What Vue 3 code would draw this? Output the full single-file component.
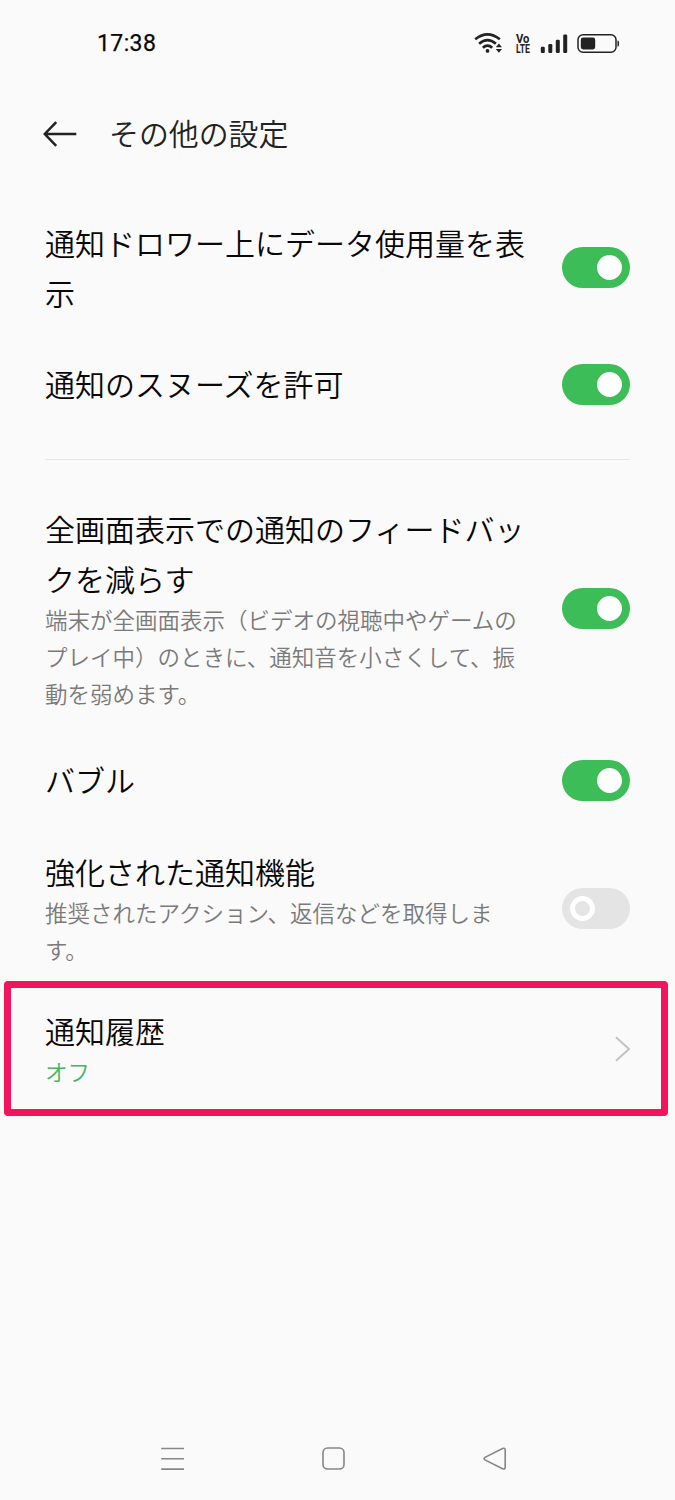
<script setup>
const general = [
  { id: 'data', lines: ['通知ドロワー上にデータ使用量を表', '示'], on: true },
  { id: 'snooze', lines: ['通知のスヌーズを許可'], on: true },
]
const feedback = [
  {
    id: 'fullscreen',
    lines: ['全画面表示での通知のフィードバッ', 'クを減らす'],
    sub: ['端末が全画面表示（ビデオの視聴中やゲームの', 'プレイ中）のときに、通知音を小さくして、振', '動を弱めます。'],
    on: true,
  },
  { id: 'bubble', lines: ['バブル'], on: true },
  { id: 'enhanced', lines: ['強化された通知機能'], sub: ['推奨されたアクション、返信などを取得しま', 'す。'], on: false },
  { id: 'history', lines: ['通知履歴'], sub: ['オフ'], link: true },
]
const groups = [general, feedback]
</script>

<template>
  <div class="screen">
    <div class="status">
      <span class="time">17:38</span>
      <div class="indicators">
        <svg class="wifi" width="30" height="24" viewBox="0 0 30 24" fill="none" stroke="#222" stroke-width="2.6">
          <path d="M1.2 7.3Q13.5-2.6 25.8 7.3" />
          <path d="M5.1 11.7Q13.5 4.6 21.9 11.7" />
          <path d="M8.8 15.7Q13.5 11.6 18.2 15.7" />
          <circle cx="13.5" cy="18.9" r="1.9" fill="#222" stroke="none" />
          <path d="M21.8 15.2l3.1-3.8 3.1 3.8zM21.8 17l3.1 3.8 3.1-3.8z" fill="#222" stroke="none" />
        </svg>
        <svg class="volte" width="16" height="20" viewBox="0 0 16 20" fill="#222">
          <text x="1" y="8.8" textLength="13.4" lengthAdjust="spacingAndGlyphs">Vo</text>
          <text x="1" y="18.5" textLength="14" lengthAdjust="spacingAndGlyphs">LTE</text>
        </svg>
        <svg class="signal" width="28" height="20" viewBox="0 0 28 20" fill="#222">
          <rect x="0.8" y="12.8" width="4" height="6.2" rx="1.2" />
          <rect x="8.3" y="10" width="4" height="9" rx="1.2" />
          <rect x="15.8" y="5.8" width="4" height="13.2" rx="1.2" />
          <rect x="23.2" y="0.6" width="4" height="18.4" rx="1.2" />
        </svg>
        <svg class="battery" width="43" height="20" viewBox="0 0 43 20">
          <rect x="1" y="0.8" width="38" height="17.4" rx="5" fill="none" stroke="#222" stroke-width="1.5" />
          <rect x="3.8" y="3.6" width="14.4" height="11.9" rx="2.4" fill="#222" />
          <path d="M40.5 6.4Q42 6.6 42 8.1V11.1Q42 12.6 40.5 12.8z" fill="#222" />
        </svg>
      </div>
    </div>

    <header class="header">
      <svg width="34" height="26" viewBox="0 0 34 26" fill="none" stroke="#222" stroke-width="2.5">
        <path d="M33.3 13H2M13.2 1.2L1.8 13L13.2 24.8" />
      </svg>
      <h1>その他の設定</h1>
    </header>

    <main>
      <section v-for="(rows, g) in groups" :key="g" class="group">
        <div v-for="row in rows" :key="row.id" class="row" :class="row.id">
          <div class="text">
            <div v-for="l in row.lines" :key="l" class="title">{{ l }}</div>
            <div v-if="row.sub" class="sub">
              <div v-for="l in row.sub" :key="l">{{ l }}</div>
            </div>
          </div>
          <svg v-if="row.link" class="chevron" width="17" height="28" viewBox="0 0 17 28" fill="none" stroke="#c4c4c4" stroke-width="2.1">
            <path d="M3 2.3L16 14L3 25.8" />
          </svg>
          <span v-else class="toggle" :class="{ on: row.on }"><i></i></span>
          <span v-if="row.link" class="highlight"></span>
        </div>
      </section>
    </main>

    <nav class="nav">
      <svg width="26" height="26" viewBox="0 0 26 26"><path d="M1.2 2.5H24M1.2 12.8H24M1.2 23.1H24" /></svg>
      <svg width="26" height="26" viewBox="0 0 26 26"><rect x="2" y="2" width="21" height="21" rx="4.6" /></svg>
      <svg width="26" height="26" viewBox="0 0 26 26"><path d="M2.9 11.4L20.6 2.5Q23.2 1.6 23.2 4V21.2Q23.2 23.6 20.6 22.7L2.9 13.9Q1.3 12.7 2.9 11.4Z" /></svg>
    </nav>
  </div>
</template>

<style>
html,
body {
  margin: 0;
  background: #fafafa;
}
</style>

<style scoped>
.screen {
  width: 675px;
  height: 1500px;
  box-sizing: border-box;
  display: flex;
  flex-direction: column;
  background: #fafafa;
  color: #080808;
  font-family: "Noto Sans CJK JP", sans-serif;
  overflow: hidden;
}
.status {
  height: 87px;
  flex: none;
  display: flex;
  align-items: center;
  justify-content: space-between;
  padding: 0 55px 0 97px;
}
.time {
  margin-top: 1px;
  font: 400 23px/30px Roboto, sans-serif;
  letter-spacing: 0.4px;
  -webkit-text-stroke: 0.25px #080808;
}
.indicators {
  display: flex;
  align-items: center;
}
.volte {
  margin: 0 9px 0 11px;
  font: 700 12px Roboto, sans-serif;
}
.battery {
  margin-left: 9px;
}
.header {
  height: 94px;
  flex: none;
  display: flex;
  align-items: center;
  padding-left: 43px;
}
h1 {
  margin: -4px 0 0 32px;
  font-size: 29.9px;
  line-height: 50px;
  font-weight: 350;
  color: #222;
}
main {
  flex: 1;
  padding: 16px 45px 0;
}
.group + .group {
  margin-top: 29px;
  border-top: 1px solid #e8e8e8;
  padding-top: 23px;
}
.row {
  position: relative;
  display: flex;
  align-items: center;
  justify-content: space-between;
}
.data { height: 141px; }
.snooze { height: 92px; }
.fullscreen { height: 251px; }
.bubble { height: 93px; }
.enhanced { height: 163px; }
.history { height: 117px; }
.text {
  white-space: nowrap;
  padding-bottom: 3px;
}
.data .text {
  padding-bottom: 2px;
}
.title {
  font-size: 30px;
  line-height: 50px;
  font-weight: 350;
}
.sub {
  margin-top: -2px;
  font-size: 22.5px;
  line-height: 37px;
  font-weight: 350;
  color: #7a7a7a;
}
.history .sub {
  color: #45b562;
}
.toggle {
  width: 68px;
  height: 41px;
  box-sizing: border-box;
  padding: 0 8px;
  border-radius: 21px;
  background: #e4e4e4;
  display: flex;
  align-items: center;
  flex: none;
}
.toggle i {
  width: 25px;
  height: 25px;
  box-sizing: border-box;
  border: 5px solid #fff;
  border-radius: 50%;
}
.toggle.on {
  background: #3dbd57;
  justify-content: flex-end;
}
.toggle.on i {
  background: #fff;
}
.highlight {
  position: absolute;
  left: -41px;
  right: -38px;
  top: -9px;
  bottom: -9px;
  border: 7px solid #f2145c;
  border-radius: 4px;
}
.nav {
  height: 82px;
  flex: none;
  display: flex;
  align-items: center;
  justify-content: center;
  gap: 135px;
  padding-right: 7px;
}
.nav svg {
  fill: none;
  stroke: #868686;
  stroke-width: 1.6;
}
</style>
